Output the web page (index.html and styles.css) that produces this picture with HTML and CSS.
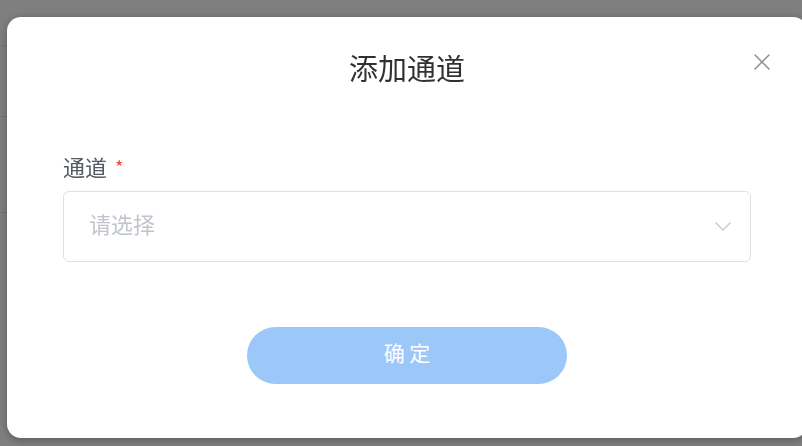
FILE: index.html
```html
<!DOCTYPE html>
<html lang="zh-CN">
<head>
<meta charset="utf-8">
<title>添加通道</title>
<link rel="stylesheet" href="styles.css">
</head>
<body>
<div class="page">
  <div class="page-row r1"></div>
  <div class="page-row r2"></div>
  <div class="page-row r3"></div>
</div>
<div class="mask">
  <div class="dialog">
    <div class="dialog-header">
      <span class="dialog-title">添加通道</span>
      <button class="dialog-close" aria-label="关闭">
        <svg width="16" height="16" viewBox="0 0 16 16"><path d="M1 1 L15 15 M15 1 L1 15" stroke="#8c8f96" stroke-width="1.5" fill="none" stroke-linecap="round"/></svg>
      </button>
    </div>
    <div class="dialog-body">
      <div class="form-item">
        <label class="form-label">通道<span class="required">*</span></label>
        <div class="select">
          <span class="placeholder">请选择</span>
          <svg class="chevron" width="16" height="9" viewBox="0 0 16 9"><path d="M1 1 L8 8 L15 1" stroke="#c6c8d0" stroke-width="1.4" fill="none" stroke-linejoin="round" stroke-linecap="round"/></svg>
        </div>
      </div>
    </div>
    <div class="dialog-footer">
      <button class="btn-primary">确 定</button>
    </div>
  </div>
</div>
</body>
</html>
```
FILE: styles.css
```css
* { box-sizing: border-box; }
html, body { margin: 0; padding: 0; }
body {
  width: 802px;
  height: 446px;
  overflow: hidden;
  background: #ffffff;
  font-family: "Noto Sans CJK SC", "Noto Sans", sans-serif;
}
.page { display: flex; flex-direction: column; }
.page-row { border-bottom: 1px solid #e8e8e8; }
.r1 { height: 46px; }
.r2 { height: 71px; }
.r3 { height: 96px; }
.mask {
  position: fixed;
  inset: 0;
  background: rgba(0, 0, 0, 0.5);
}
.dialog {
  margin: 17px 0 0 7px;
  width: 800px;
  height: 421px;
  background: #fff;
  border-radius: 14px;
  box-shadow: 0 2px 10px rgba(0, 0, 0, 0.3);
  display: flex;
  flex-direction: column;
}
.dialog-header {
  position: relative;
  display: flex;
  justify-content: center;
  padding-top: 30px;
}
.dialog-title {
  font-size: 29px;
  line-height: 40px;
  color: #303133;
}
.dialog-close {
  position: absolute;
  top: 37px;
  right: 37px;
  width: 16px;
  height: 16px;
  padding: 0;
  border: 0;
  background: none;
  display: flex;
}
.dialog-body {
  padding: 67px 56px 0;
}
.form-label {
  display: block;
  font-size: 22px;
  line-height: 24px;
  color: #555960;
  margin-bottom: 13px;
}
.required {
  color: #f04134;
  font-size: 18px;
  margin-left: 8px;
  vertical-align: top;
}
.select {
  height: 71px;
  border: 1px solid #dcdfe6;
  border-radius: 6px;
  display: flex;
  align-items: center;
  justify-content: space-between;
  padding: 0 19px 0 25px;
}
.placeholder {
  font-size: 22px;
  line-height: 26px;
  padding-bottom: 7px;
  color: #c0c4cc;
}
.dialog-footer {
  display: flex;
  justify-content: center;
  padding-top: 65px;
}
.btn-primary {
  width: 320px;
  height: 57px;
  border: 0;
  border-radius: 29px;
  background: #9cc8f9;
  color: #fff;
  font-family: "Noto Sans CJK SC", "Noto Sans", sans-serif;
  font-size: 21px;
  padding: 0 0 8px;
}
```
